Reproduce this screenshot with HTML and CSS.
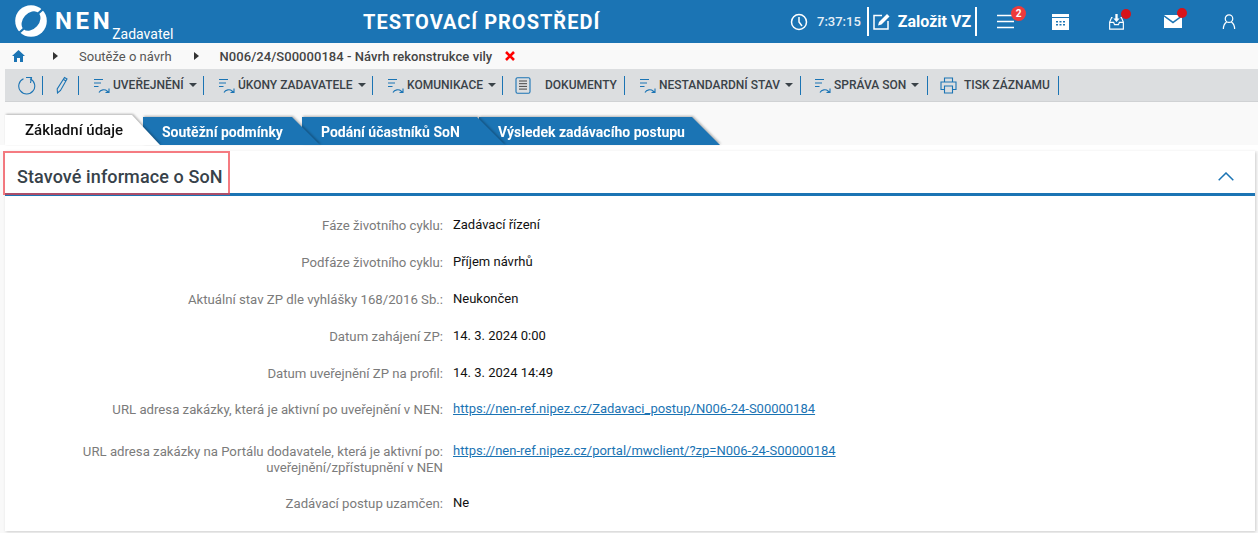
FILE: index.html
```html
<!DOCTYPE html>
<html lang="cs">
<head>
<meta charset="utf-8">
<title>NEN</title>
<link rel="stylesheet" href="styles.css">
</head>
<body>
<svg class="defs" width="0" height="0" aria-hidden="true">
  <symbol id="act" viewBox="0 0 18 18">
    <path d="M1 2.500h9M1 6h7M1 9.500h4.500" fill="none" stroke="#1b74b4" stroke-width="1.100"/>
    <path d="M6 15.500c1.500-3 6-3.500 8-1.500l1.500 1.500M16 11.500v4h-3.500" fill="none" stroke="#1b74b4" stroke-width="1.100"/>
  </symbol>
</svg>
<header class="top">
  <div class="brand">
    <svg class="logo" width="32" height="32" viewBox="0 0 32 32"><circle cx="16" cy="16" r="15.800" fill="#fff"/><ellipse cx="16" cy="16" rx="8" ry="11" transform="rotate(42 16 16)" fill="#1b74b4"/><path d="M22 9.500C25 6.500 28 4 31 2M10 22.500C7 25.500 4 28 1 30" fill="none" stroke="#1b74b4" stroke-width="2.200"/></svg>
    <span class="nen">NEN</span>
    <span class="role">Zadavatel</span>
  </div>
  <div class="env">TESTOVACÍ PROSTŘEDÍ</div>
  <div class="tools">
    <svg class="clock" width="18" height="18" viewBox="0 0 18 18"><circle cx="9" cy="9" r="7.500" fill="none" stroke="#fff" stroke-width="1.500"/><path d="M9 4v5l3 4" fill="none" stroke="#fff" stroke-width="1.500"/></svg>
    <span class="time">7:37:15</span>
    <div class="new">
      <svg width="17" height="17" viewBox="0 0 17 17"><path d="M9 2.500H1v13.500h14V8" fill="none" stroke="#fff" stroke-width="1.500"/><path d="M6 9l8-8 2.500 2.500-8 8-3.500 1z" fill="#fff"/></svg>
      <span>Založit VZ</span>
    </div>
    <div class="ico ico-menu">
      <svg width="17" height="15" viewBox="0 0 17 15"><path d="M0 1.500h17M0 7.500h17M0 13.500h17" stroke="#fff" stroke-width="1.600"/></svg>
      <span class="badge">2</span>
    </div>
    <div class="ico ico-cal">
      <svg width="17" height="16" viewBox="0 0 17 16"><path d="M0 0h17v16H0z" fill="#fff"/><path d="M0 3.500h17" stroke="#1b74b4"/><path d="M4 7h2v1.500H4zM7.500 7h2v1.500h-2zM11 7h2v1.500h-2zM4 10h2v1.500H4zM7.500 10h2v1.500h-2zM11 10h2v1.500h-2z" fill="#1b74b4"/></svg>
    </div>
    <div class="ico ico-in">
      <svg width="17" height="16" viewBox="0 0 17 18"><path d="M4 4H3L.8 9v8h15.400V9L14 4h-1M.8 9.500h4.500l1 2.500h4.400l1-2.500h4.500" fill="none" stroke="#fff" stroke-width="1.300"/><path d="M7.200 0h2.600v5H12l-3.500 4L5 5h2.200z" fill="#fff"/></svg>
      <span class="dot"></span>
    </div>
    <div class="ico ico-mail">
      <svg width="18" height="13" viewBox="0 0 18 13"><path d="M0 0h18L9 6.500z M0 1.800v11.200h18V1.800L9 8.500z" fill="#fff"/></svg>
      <span class="dot"></span>
    </div>
    <div class="ico ico-user">
      <svg width="14" height="15" viewBox="0 0 14 16"><circle cx="7" cy="5" r="4" fill="none" stroke="#fff" stroke-width="1.300"/><path d="M1 16c0-4 2-6.500 3.500-7.500M13 16c0-4-2-6.500-3.500-7.500" fill="none" stroke="#fff" stroke-width="1.300"/></svg>
    </div>
  </div>
</header>

<nav class="crumbs">
  <svg class="home" width="13" height="12" viewBox="0 0 13 12"><path d="M6.500 0L13 6h-2v6H8V8H5v4H2V6H0z" fill="#1b74b4"/></svg>
  <span class="arr"></span>
  <span class="crumb">Soutěže o návrh</span>
  <span class="arr"></span>
  <b class="crumb-cur">N006/24/S00000184 - Návrh rekonstrukce vily</b>
  <svg class="close" width="10" height="10" viewBox="0 0 10 10"><path d="M1 1l8 8M9 1l-8 8" stroke="#f00" stroke-width="2.600"/></svg>
</nav>

<div class="bar">
  <button class="btn b-refresh"><svg width="19" height="19" viewBox="0 0 19 19"><path d="M12 2.700A8 8 0 1 1 5.500 2.700" fill="none" stroke="#1b74b4" stroke-width="1.100"/><path d="M8 1.500H13.500L12.500 7" fill="none" stroke="#1b74b4" stroke-width="1.100"/></svg></button>
  <button class="btn b-edit"><svg width="12" height="18" viewBox="0 0 12 18"><path d="M8.500 1.500l2.500 1.500-6.500 11.500-3 2.500-.3-4z M7.500 3.500l2.500 1.500" fill="none" stroke="#1b74b4" stroke-width="1.100"/></svg></button>
  <button class="btn b-a"><svg class="ai"><use href="#act"/></svg><span>UVEŘEJNĚNÍ</span><i class="caret"></i></button>
  <button class="btn b-b"><svg class="ai"><use href="#act"/></svg><span>ÚKONY ZADAVATELE</span><i class="caret"></i></button>
  <button class="btn b-c"><svg class="ai"><use href="#act"/></svg><span>KOMUNIKACE</span><i class="caret"></i></button>
  <button class="btn b-d"><svg class="di" width="16" height="17" viewBox="0 0 16 17"><path d="M2.500.7h11a1.500 1.500 0 0 1 1.500 1.500v12.600a1.500 1.500 0 0 1-1.500 1.500h-11A1.500 1.500 0 0 1 1 14.800V2.200A1.500 1.500 0 0 1 2.500.7z" fill="none" stroke="#1b74b4" stroke-width="1.100"/><path d="M4 4h8M4 6.700h8M4 9.400h8M4 12.100h8" stroke="#333" stroke-width=".9"/></svg><span>DOKUMENTY</span></button>
  <button class="btn b-e"><svg class="ai"><use href="#act"/></svg><span>NESTANDARDNÍ STAV</span><i class="caret"></i></button>
  <button class="btn b-f"><svg class="ai"><use href="#act"/></svg><span>SPRÁVA SON</span><i class="caret"></i></button>
  <button class="btn b-g"><svg class="pi" width="17" height="17" viewBox="0 0 17 17"><path d="M4.500 5V1h8v4M4.500 12.500H1V5h15v7.500h-3.500M4.500 9h8v7h-8z" fill="none" stroke="#1b74b4" stroke-width="1.100"/></svg><span>TISK ZÁZNAMU</span></button>
</div>

<div class="tabs">
  <div class="tab tab-on t1">Základní údaje</div>
  <div class="tab t2">Soutěžní podmínky</div>
  <div class="tab t3">Podání účastníků SoN</div>
  <div class="tab t4">Výsledek zadávacího postupu</div>
</div>

<section class="panel">
  <div class="phead">
    <h2>Stavové informace o SoN</h2>
    <svg class="chev" width="16" height="9" viewBox="0 0 16 9"><path d="M.7 8.300L8 1l7.300 7.300" fill="none" stroke="#1b74b4" stroke-width="1.500"/></svg>
  </div>
  <dl class="rows">
    <div class="row"><dt>Fáze životního cyklu:</dt><dd>Zadávací řízení</dd></div>
    <div class="row"><dt>Podfáze životního cyklu:</dt><dd>Příjem návrhů</dd></div>
    <div class="row"><dt>Aktuální stav ZP dle vyhlášky 168/2016 Sb.:</dt><dd>Neukončen</dd></div>
    <div class="row"><dt>Datum zahájení ZP:</dt><dd>14. 3. 2024 0:00</dd></div>
    <div class="row"><dt>Datum uveřejnění ZP na profil:</dt><dd>14. 3. 2024 14:49</dd></div>
    <div class="row row-u1"><dt>URL adresa zakázky, která je aktivní po uveřejnění v NEN:</dt><dd><a href="#">https://nen-ref.nipez.cz/Zadavaci_postup/N006-24-S00000184</a></dd></div>
    <div class="row row-u2"><dt>URL adresa zakázky na Portálu dodavatele, která je aktivní po: uveřejnění/zpřístupnění v NEN</dt><dd><a href="#">https://nen-ref.nipez.cz/portal/mwclient/?zp=N006-24-S00000184</a></dd></div>
    <div class="row"><dt>Zadávací postup uzamčen:</dt><dd>Ne</dd></div>
  </dl>
  <div class="mark"></div>
</section>
</body>
</html>
```

FILE: styles.css
```css
* { box-sizing: border-box; }
html, body { margin: 0; height: 533px; overflow: hidden; }
body { background: #f9f9f9; font-family: Roboto, "Liberation Sans", sans-serif; color: #000; }
.defs { position: absolute; }

.top { height: 43px; background: #1b74b4; color: #fff; display: flex; align-items: center; position: relative; }
.brand { display: flex; align-items: flex-start; width: 340px; height: 43px; padding: 5px 0 0 15px; }
.logo { flex: none; }
.nen { font-size: 24px; font-weight: 700; letter-spacing: 3.600px; line-height: 32px; margin-left: 8px; }
.role { font-size: 14px; line-height: 16px; margin: 21px 0 0 -1px; }
.env { width: 450px; padding-left: 23px; font-size: 20px; font-weight: 700; letter-spacing: 1px; }
.tools { flex: 1; display: flex; align-items: center; height: 43px; position: relative; }
.time { font-size: 13px; font-weight: 500; margin-left: 9px; color: #e6f0f7; }
.new { display: flex; align-items: center; gap: 8px; height: 29px; margin-left: 6px; padding: 0 4px 0 4px; border-left: 2px solid #fff; border-right: 2px solid #fff; font-size: 16px; font-weight: 700; }
.ico { position: relative; display: flex; }
.ico-menu { margin-left: 20px; }
.ico-cal { margin-left: 38px; }
.ico-in { margin-left: 39px; }
.ico-mail { margin-left: 39px; }
.ico-user { margin-left: 40px; }
.badge { position: absolute; top: -8px; left: 14px; width: 15px; height: 15px; border-radius: 50%; background: #ee3b3b; font-size: 10px; font-weight: 700; line-height: 15px; text-align: center; }
.dot { position: absolute; top: -5px; right: -6px; width: 10px; height: 10px; border-radius: 50%; background: #d7141a; }
.ico-mail .dot { top: -7px; right: -5px; }

.crumbs { height: 26px; display: flex; align-items: center; padding-left: 12px; font-size: 13px; color: #555; }
.arr { width: 0; height: 0; border-left: 5px solid #333; border-top: 4px solid transparent; border-bottom: 4px solid transparent; }
.home { margin-right: 28px; }
.crumb { margin: 0 22px 0 21px; }
.crumb-cur { margin-left: 21px; font-weight: 500; color: #444; letter-spacing: .05px; }
.close { margin-left: 13px; }

.bar { height: 33px; margin-left: 5px; background: #dcdee0; border-bottom: 1px solid #d0d2d4; display: flex; align-items: center; padding-left: 13px; }
.btn { height: 19px; display: flex; align-items: center; padding: 0; border: 0; border-right: 1px solid #1b74b4; background: none; font: 500 12px Roboto, sans-serif; color: #3a4248; white-space: nowrap; }
.ai { width: 18px; height: 18px; flex: none; margin-right: 2px; position: relative; top: 1px; }
.caret { width: 0; height: 0; margin-left: 5px; border-top: 4.500px solid #3a4248; border-left: 4px solid transparent; border-right: 4px solid transparent; }
.b-refresh { width: 25px; }
.b-edit { width: 36px; padding-left: 13px; }
.b-a { width: 125px; padding-left: 14px; }
.b-b { width: 169px; padding-left: 14px; }
.b-c { width: 130px; padding-left: 14px; }
.b-d { width: 122px; padding-left: 12px; }
.di { margin-right: 14px; }
.b-e { width: 176px; padding-left: 14px; }
.b-f { width: 127px; padding-left: 13px; }
.b-g { width: 131px; padding-left: 12px; }
.pi { margin-right: 7px; }

.tabs { height: 36px; margin-top: 13px; display: flex; font-size: 14px; font-weight: 700; border-bottom: 6px solid #fff; }
.tab { position: relative; height: 30px; padding-top: 9px; color: #fff; line-height: 17px; filter: drop-shadow(1.500px -.5px 1px rgba(0,0,0,.28)); white-space: nowrap; }
.tab::before { content: ""; position: absolute; inset: 2px 0 0 0; z-index: -1; background: #1b74b4; clip-path: polygon(0 0, calc(100% - 28px) 0, 100% 100%, 0 100%); }
.tab-on { color: #111; font-size: 15px; font-weight: 500; padding-top: 7px; }
.tab-on::before { background: #fff; inset: 0; }
.t1 { z-index: 4; margin-left: 5px; width: 155px; padding-left: 20px; }
.t2 { z-index: 3; margin-left: -17px; width: 177px; padding-left: 19px; }
.t3 { z-index: 2; margin-left: -18px; width: 203px; padding-left: 19px; }
.t4 { z-index: 1; margin-left: -26px; width: 241px; padding-left: 19px; }

.panel { position: relative; height: 380px; margin: 0 3px 0 5px; background: #fff; box-shadow: 1px 1px 3px rgba(0,0,0,.18); }
.phead { height: 45px; border-bottom: 3px solid #1b74b4; display: flex; align-items: center; justify-content: space-between; padding: 8px 21px 0 12px; }
h2 { margin: 0; font-size: 18px; font-weight: 500; color: #37424a; letter-spacing: .1px; }
.rows { margin: 13px 0 0; }
.row { display: grid; grid-template-columns: 438px 1fr; column-gap: 10px; height: 37px; align-items: start; padding-top: 8px; font-size: 13px; line-height: 16px; }
.row-u1 { height: 42px; padding-top: 7px; }
.row-u2 { height: 51px; padding-top: 7px; }
dt { color: #7b7b7b; font-size: 13.200px; text-align: right; padding: 1px 0 0 75px; }
dd { margin: 0; font-weight: 400; color: #111; }
a { color: #1b74b4; }
.mark { position: absolute; left: -2px; top: 0; width: 227px; height: 44px; border: 2px solid rgba(240,60,70,.68); }
```
